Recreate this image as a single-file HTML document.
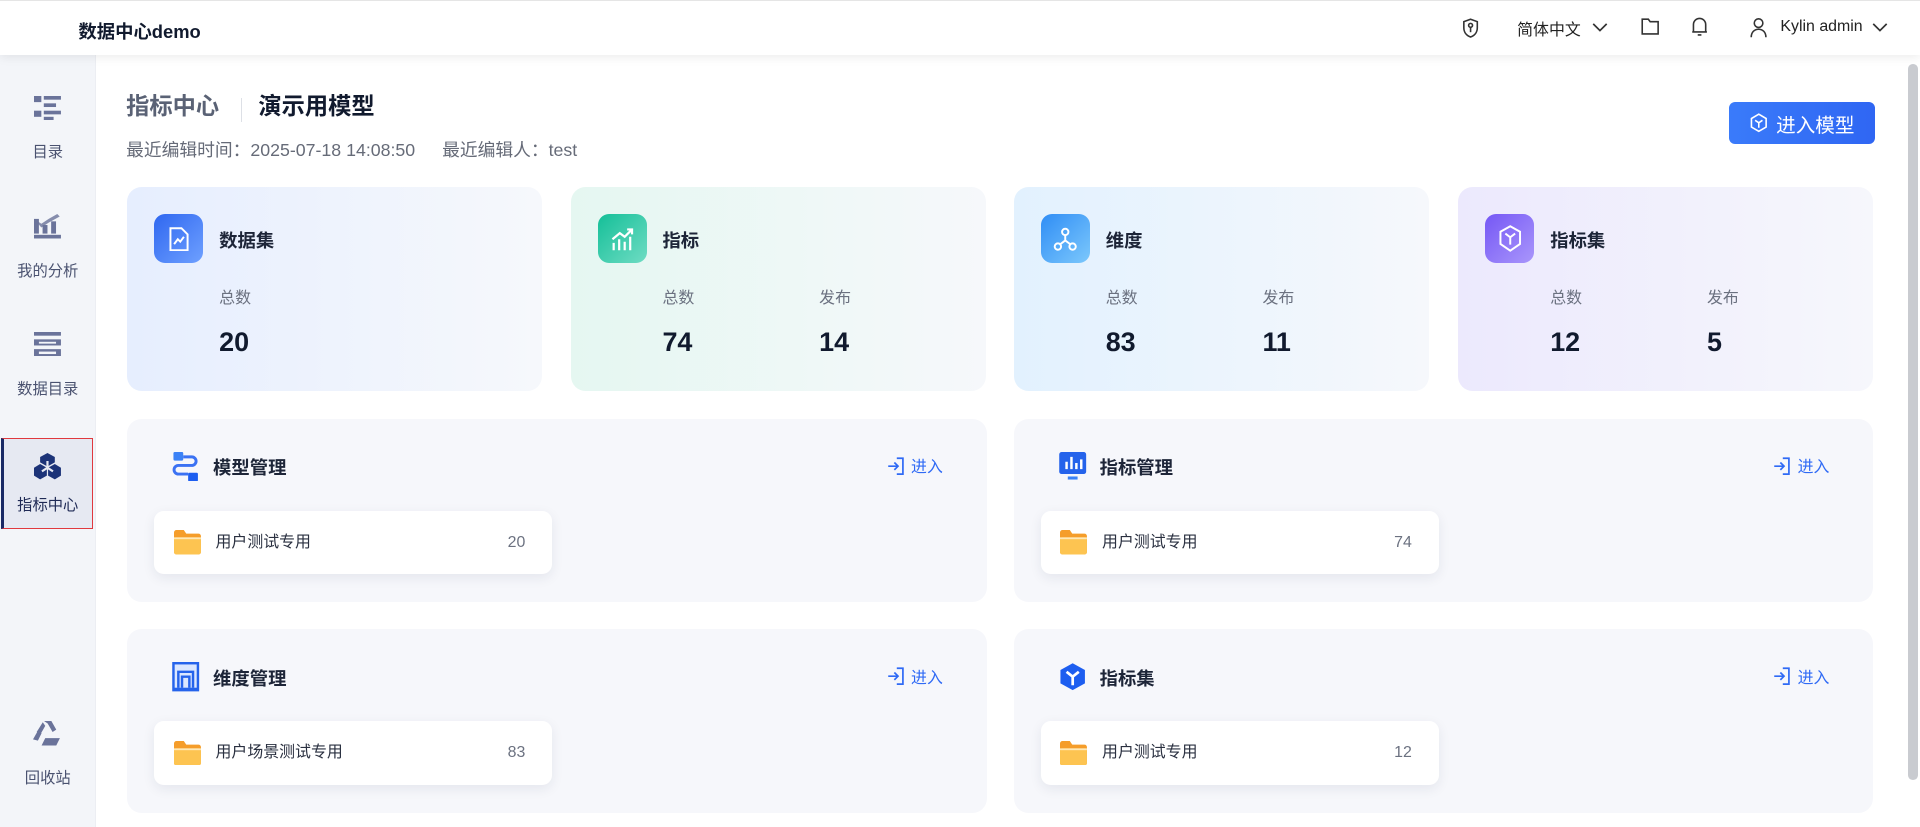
<!DOCTYPE html>
<html><head><meta charset="utf-8"><style>
html{zoom:1.2245}
*{box-sizing:border-box;margin:0;padding:0}
body{width:1568px;height:675px;overflow:hidden;background:#fff;font-family:"Liberation Sans","Noto Sans CJK SC",sans-serif;color:#1d2538;position:relative}
.abs{position:absolute}
.hdr{left:0;top:0;width:1568px;height:45px;background:#fff;box-shadow:0 2px 8px rgba(0,0,0,.08);z-index:5;border-top:1px solid #e5e5e5}
.side{left:0;top:45px;width:78px;height:630px;background:#f3f5f9;border-right:1px solid #eceef3}
.si{position:absolute;left:0;width:78px;text-align:center;font-size:12.5px;color:#4a5270;line-height:1.2}
.si svg{display:block;margin:0 auto 20px}
.card{position:absolute;top:153px;width:339px;height:166px;border-radius:12px}
.ic{position:absolute;left:22px;top:22px;width:40px;height:40px;border-radius:9px;display:flex;align-items:center;justify-content:center}
.ct{position:absolute;left:75px;top:32px;font-size:15px;font-weight:bold}
.lb{position:absolute;top:80px;font-size:13px;color:#6b7180}
.nm{position:absolute;top:114px;font-size:22px;font-weight:bold;color:#111a2e}
.pn{position:absolute;width:702px;height:150px;background:#f6f7fb;border-radius:12px}
.pt{position:absolute;left:70px;top:29px;font-size:15px;font-weight:bold}
.pi{position:absolute;left:36px;top:27px}
.go{position:absolute;right:36px;top:29px;font-size:13px;color:#2f6af5;display:flex;align-items:center;gap:5px}
.it{position:absolute;left:22px;top:75px;width:325px;height:52px;background:#fff;border-radius:8px;box-shadow:0 3px 10px rgba(30,40,80,.08);font-size:13px;color:#2a3040;line-height:1.2}
.it .f{position:absolute;left:16px;top:16px}
.it .t{position:absolute;left:50px;top:18px}
.it .n{position:absolute;right:22px;top:18px;color:#6b7180}
</style></head><body>
<div class="abs hdr">
<div class="abs" style="left:64px;top:14px;font-size:15px;font-weight:bold;color:#111a2e">数据中心demo</div>
<svg class="abs" style="left:1194px;top:14px" width="14" height="17" viewBox="0 0 14 17" fill="none" stroke="#333" stroke-width="1.3"><path d="M7 1l5.5 2v5c0 4-2.5 6.5-5.5 7.5C4 14.5 1.5 12 1.5 8V3z"/><circle cx="7" cy="6" r="1.6"/><path d="M7 7.6v4"/></svg>
<div class="abs" style="left:1239px;top:13px;font-size:13px;color:#222">简体中文</div>
<svg class="abs" style="left:1300px;top:17px" width="13" height="9" viewBox="0 0 13 9" fill="none" stroke="#333" stroke-width="1.4"><path d="M1 1.5l5.5 5.5 5.5-5.5"/></svg>
<svg class="abs" style="left:1340px;top:14px" width="15" height="14" viewBox="0 0 15 14" fill="none" stroke="#333" stroke-width="1.3"><path d="M1 1h5l1.5 2H14v10H1z"/></svg>
<svg class="abs" style="left:1381px;top:12px" width="14" height="17" viewBox="0 0 14 17" fill="none" stroke="#333" stroke-width="1.3"><path d="M2 13V7a5 5 0 0110 0v6zM1 13h12M5.5 15.5h3"/></svg>
<svg class="abs" style="left:1429px;top:13px" width="14" height="17" viewBox="0 0 14 17" fill="none" stroke="#333" stroke-width="1.3"><circle cx="7" cy="5" r="3.5"/><path d="M1 16.5c0-4 2.5-6.5 6-6.5s6 2.5 6 6.5"/></svg>
<div class="abs" style="left:1454px;top:14px;font-size:13px;color:#222">Kylin admin</div>
<svg class="abs" style="left:1529px;top:17px" width="13" height="9" viewBox="0 0 13 9" fill="none" stroke="#333" stroke-width="1.4"><path d="M1 1.5l5.5 5.5 5.5-5.5"/></svg>
</div>
<div class="abs side">
<div class="si" style="top:33px"><svg width="22" height="20" viewBox="0 0 22 20" fill="#6a739a"><rect x="0" y="0" width="6" height="5"/><rect x="8" y="0" width="14" height="3"/><rect x="8" y="6" width="10" height="3"/><rect x="0" y="12" width="6" height="5"/><rect x="8" y="12" width="14" height="3"/><rect x="8" y="17" width="8" height="3"/></svg>目录</div>
<div class="si" style="top:130px"><svg width="22" height="20" viewBox="0 0 22 20" fill="#6a739a"><rect x="0" y="4" width="4" height="12"/><rect x="7" y="9" width="4" height="7"/><rect x="14" y="6" width="4" height="10"/><rect x="0" y="17" width="22" height="3"/><path d="M0 4l6 4 6-4 7-4 2 2-9 5-6 4z" opacity=".8"/></svg>我的分析</div>
<div class="si" style="top:226px"><svg width="22" height="20" viewBox="0 0 22 20" fill="#6a739a"><rect x="0" y="0" width="22" height="3"/><rect x="0" y="6" width="22" height="5"/><rect x="0" y="14" width="22" height="6"/><rect x="4" y="8" width="14" height="1.5" fill="#f3f5f9"/><rect x="4" y="16" width="14" height="2" fill="#f3f5f9"/></svg>数据目录</div>
<div style="position:absolute;left:1px;top:313px;width:75px;height:74px;background:#e6e9f2;border:1.5px solid #e0393e;border-left:3px solid #1a2a66"></div>
<div class="si" style="top:325px;color:#1f2a55"><svg width="22" height="22" viewBox="0 0 22 22" fill="#1c3378" style="margin-bottom:14px"><path d="M11 0l6 3.3v4.4L11 11 5 7.7V3.3z"/><path d="M5 9l5.5 3v6.5L5 21.5 0 18.5V12z"/><path d="M17 9l5 3v6.5l-5 3-5.5-3V12z"/><path d="M11 6.5v5.5M11 12l-4.5 3M11 12l4.5 3" stroke="#e6e9f2" stroke-width="1.8"/></svg>指标中心</div>
<div class="si" style="top:544px"><svg width="24" height="20" viewBox="0 0 24 20" fill="#6a739a"><path d="M9 0h6l4 7-3 2-4-7zM0 15l4-7 3 2-3 6zM10 14h12l-3 6H7z"/><path d="M8 1L3 9l3 2 4-7z"/></svg>回收站</div>
</div>
<div class="abs" style="left:1558px;top:52px;width:8px;height:585px;background:#c9cbd0;border-radius:4px"></div>

<div class="abs" style="left:103px;top:76px;font-size:19px;font-weight:bold;color:#5a6275;line-height:1.2">指标中心</div>
<div class="abs" style="left:197px;top:80px;width:1px;height:20px;background:#dde0e6"></div>
<div class="abs" style="left:211px;top:76px;font-size:19px;font-weight:bold;color:#111a2e;line-height:1.2">演示用模型</div>
<div class="abs" style="left:103px;top:114px;font-size:14.5px;color:#666b78;line-height:1.2">最近编辑时间：2025-07-18 14:08:50<span style="display:inline-block;width:22px"></span>最近编辑人：test</div>
<div class="abs" style="left:1412px;top:83px;width:119px;height:35px;border-radius:5px;background:linear-gradient(90deg,#3a7bfa,#2f66f3);color:#fff;font-size:16px;display:flex;align-items:center;justify-content:center;gap:6px"><svg width="16" height="17" viewBox="0 0 16 17" fill="none" stroke="#fff" stroke-width="1.3"><path d="M8 1l6 3.5v7L8 15 2 11.5v-7z"/><path d="M5 6l3 2 3-2M8 8v4"/></svg>进入模型</div>

<div class="card" style="left:104px;background:linear-gradient(90deg,#e6eefe,#f6f8fc)">
<div class="ic" style="background:linear-gradient(135deg,#2f67f0,#6ea0ff)"><svg width="18" height="20" viewBox="0 0 18 20" fill="none" stroke="#fff" stroke-width="1.6"><path d="M2 1h9l5 5v13H2z"/><path d="M5 14l3-4 2 2 3-4"/></svg></div>
<div class="ct">数据集</div><div class="lb" style="left:75px">总数</div><div class="nm" style="left:75px">20</div></div>
<div class="card" style="left:466px;background:linear-gradient(90deg,#e5f7f1,#f6f8fb)">
<div class="ic" style="background:linear-gradient(135deg,#14bf98,#6fdcc3)"><svg width="20" height="20" viewBox="0 0 20 20" fill="none" stroke="#fff" stroke-width="1.8"><path d="M3 19v-6M7.5 19v-9M12 19v-7M16.5 19V8M2 10l6-5 4 3 6-6M14 2h4v4"/></svg></div>
<div class="ct">指标</div><div class="lb" style="left:75px">总数</div><div class="lb" style="left:203px">发布</div><div class="nm" style="left:75px">74</div><div class="nm" style="left:203px">14</div></div>
<div class="card" style="left:828px;background:linear-gradient(90deg,#e2f1fe,#f6f8fc)">
<div class="ic" style="background:linear-gradient(135deg,#2f8df5,#7cc8fc)"><svg width="20" height="20" viewBox="0 0 20 20" fill="none" stroke="#fff" stroke-width="1.6"><circle cx="10" cy="4" r="2.6"/><circle cx="4" cy="16" r="2.6"/><circle cx="16" cy="16" r="2.6"/><path d="M10 6.6v4.4L6 14M10 11l4 3"/></svg></div>
<div class="ct">维度</div><div class="lb" style="left:75px">总数</div><div class="lb" style="left:203px">发布</div><div class="nm" style="left:75px">83</div><div class="nm" style="left:203px">11</div></div>
<div class="card" style="left:1191px;background:linear-gradient(90deg,#ece9fd,#f6f7fc)">
<div class="ic" style="background:linear-gradient(135deg,#7557f5,#a996fb)"><svg width="20" height="22" viewBox="0 0 20 22" fill="none" stroke="#fff" stroke-width="1.6"><path d="M10 1l8 4.5v10L10 21 2 15.5v-10z"/><path d="M6 7l4 3 4-3M10 10v6"/></svg></div>
<div class="ct">指标集</div><div class="lb" style="left:75px">总数</div><div class="lb" style="left:203px">发布</div><div class="nm" style="left:75px">12</div><div class="nm" style="left:203px">5</div></div>

<div class="pn" style="left:104px;top:342px">
<svg class="pi" width="24" height="24" viewBox="0 0 24 24"><rect x="2" y="0" width="8" height="7" rx="1" fill="#3b82f6"/><rect x="14" y="17" width="8" height="7" rx="1" fill="#1d5ef0"/><path d="M10 4h7a3.5 3.5 0 010 7H6a3.5 3.5 0 000 7h8" fill="none" stroke="#3b72f3" stroke-width="2.4"/></svg>
<div class="pt">模型管理</div>
<div class="go"><svg width="15" height="15" viewBox="0 0 15 15" fill="none" stroke="#2f6af5" stroke-width="1.4"><path d="M8 1h5v13H8M1 7.5h8M6 4.5l3 3-3 3"/></svg>进入</div>
<div class="it"><svg class="f" width="22" height="20" viewBox="0 0 22 20"><path d="M0 2a2 2 0 012-2h6l2 3h10a2 2 0 012 2v13a2 2 0 01-2 2H2a2 2 0 01-2-2z" fill="#f59d2a"/><rect x="0" y="6" width="22" height="14" rx="2" fill="#fdc451"/><rect x="0" y="6" width="22" height="1.5" fill="#ffe8b5"/></svg><span class="t">用户测试专用</span><span class="n">20</span></div>
</div>
<div class="pn" style="left:828px;top:342px">
<svg class="pi" width="24" height="24" viewBox="0 0 24 24"><rect x="1" y="0" width="22" height="18" rx="2" fill="#2563eb"/><path d="M7 14V8M11 14V4M15 14V9M19 14V6" stroke="#fff" stroke-width="2"/><rect x="8" y="20" width="8" height="2.5" fill="#3b82f6"/></svg>
<div class="pt">指标管理</div>
<div class="go"><svg width="15" height="15" viewBox="0 0 15 15" fill="none" stroke="#2f6af5" stroke-width="1.4"><path d="M8 1h5v13H8M1 7.5h8M6 4.5l3 3-3 3"/></svg>进入</div>
<div class="it"><svg class="f" width="22" height="20" viewBox="0 0 22 20"><path d="M0 2a2 2 0 012-2h6l2 3h10a2 2 0 012 2v13a2 2 0 01-2 2H2a2 2 0 01-2-2z" fill="#f59d2a"/><rect x="0" y="6" width="22" height="14" rx="2" fill="#fdc451"/><rect x="0" y="6" width="22" height="1.5" fill="#ffe8b5"/></svg><span class="t">用户测试专用</span><span class="n">74</span></div>
</div>
<div class="pn" style="left:104px;top:514px">
<svg class="pi" width="24" height="24" viewBox="0 0 24 24"><rect x="1" y="0" width="22" height="24" fill="#2563eb"/><rect x="3" y="2" width="18" height="19" fill="#dbe7ff"/><path d="M6 21V8h12v13M9 21v-9h6v9" fill="none" stroke="#2563eb" stroke-width="2"/></svg>
<div class="pt">维度管理</div>
<div class="go"><svg width="15" height="15" viewBox="0 0 15 15" fill="none" stroke="#2f6af5" stroke-width="1.4"><path d="M8 1h5v13H8M1 7.5h8M6 4.5l3 3-3 3"/></svg>进入</div>
<div class="it"><svg class="f" width="22" height="20" viewBox="0 0 22 20"><path d="M0 2a2 2 0 012-2h6l2 3h10a2 2 0 012 2v13a2 2 0 01-2 2H2a2 2 0 01-2-2z" fill="#f59d2a"/><rect x="0" y="6" width="22" height="14" rx="2" fill="#fdc451"/><rect x="0" y="6" width="22" height="1.5" fill="#ffe8b5"/></svg><span class="t">用户场景测试专用</span><span class="n">83</span></div>
</div>
<div class="pn" style="left:828px;top:514px">
<svg class="pi" width="24" height="24" viewBox="0 0 24 24"><path d="M12 1l10 5.5v11L12 23 2 17.5v-11z" fill="#1d5ef0"/><path d="M7 8l5 4 5-4M12 12v7" stroke="#fff" stroke-width="2.2" fill="none"/></svg>
<div class="pt">指标集</div>
<div class="go"><svg width="15" height="15" viewBox="0 0 15 15" fill="none" stroke="#2f6af5" stroke-width="1.4"><path d="M8 1h5v13H8M1 7.5h8M6 4.5l3 3-3 3"/></svg>进入</div>
<div class="it"><svg class="f" width="22" height="20" viewBox="0 0 22 20"><path d="M0 2a2 2 0 012-2h6l2 3h10a2 2 0 012 2v13a2 2 0 01-2 2H2a2 2 0 01-2-2z" fill="#f59d2a"/><rect x="0" y="6" width="22" height="14" rx="2" fill="#fdc451"/><rect x="0" y="6" width="22" height="1.5" fill="#ffe8b5"/></svg><span class="t">用户测试专用</span><span class="n">12</span></div>
</div>
</body></html>
